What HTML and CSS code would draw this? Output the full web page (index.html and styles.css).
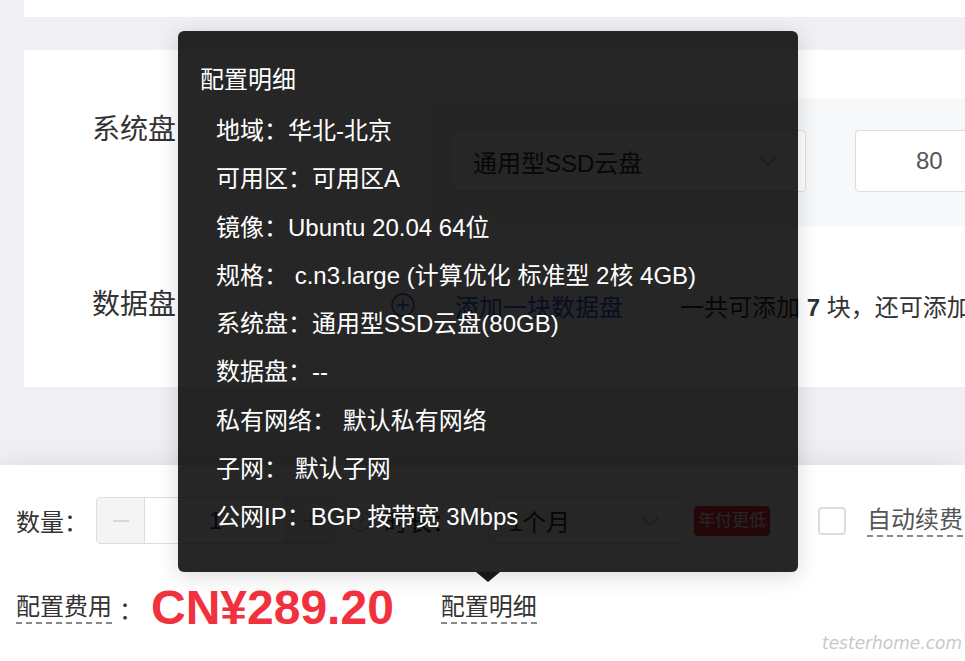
FILE: index.html
```html
<!DOCTYPE html>
<html>
<head>
    <meta charset="utf-8">
    <title>配置明细</title>
    <link rel="stylesheet" href="styles.css">
</head>
<body>
<div class="page">
    <div class="strip"></div>

    <section class="card">
        <div class="row row-sys">
            <div class="row-label">系统盘</div>
            <div class="disk-panel">
                <div class="select select-disk">
                    <span>通用型SSD云盘</span>
                    <svg class="chevron" width="18" height="10" viewBox="0 0 18 10"><path d="M1 1l8 8 8-8" fill="none" stroke="#aaa" stroke-width="1.3"/></svg>
                </div>
                <div class="size-input">80</div>
            </div>
        </div>
        <div class="row row-data">
            <div class="row-label">数据盘</div>
            <a class="add-link">
                <svg width="24" height="24" viewBox="0 0 24 24"><circle cx="12" cy="12" r="11" fill="none" stroke="#2f5bea" stroke-width="1.4"/><path d="M12 6v12M6 12h12" stroke="#2f5bea" stroke-width="1.4"/></svg>
                <span>添加一块数据盘</span>
            </a>
            <span class="add-hint">一共可添加 <b>7</b> 块，还可添加</span>
        </div>
    </section>

    <footer class="buy-bar">
        <div class="buy-row">
            <span class="buy-label">数量：</span>
            <div class="stepper">
                <span class="step-btn"><svg width="16" height="2" viewBox="0 0 16 2"><path d="M0 1h16" stroke="#bbb" stroke-width="1.2"/></svg></span>
                <span class="step-value">1</span>
                <span class="step-btn step-plus"><svg width="16" height="16" viewBox="0 0 16 16"><path d="M0 8h16M8 0v16" stroke="#888" stroke-width="1.2"/></svg></span>
            </div>
            <svg class="help-icon" width="22" height="22" viewBox="0 0 22 22"><circle cx="11" cy="11" r="10" fill="none" stroke="#bbb" stroke-width="1.3"/><path d="M8 8.5a3 3 0 1 1 4.2 2.7c-.8.4-1.2 1-1.2 1.8v.8" fill="none" stroke="#bbb" stroke-width="1.3"/><circle cx="11" cy="16.3" r=".9" fill="#bbb"/></svg>
            <span class="buy-label period-label">时长：</span>
            <div class="select select-period">
                <span>1个月</span>
                <svg class="chevron" width="18" height="10" viewBox="0 0 18 10"><path d="M1 1l8 8 8-8" fill="none" stroke="#aaa" stroke-width="1.3"/></svg>
            </div>
            <span class="tag">年付更低</span>
            <label class="auto-renew">
                <span class="checkbox"></span>
                <span class="dashed renew-text">自动续费</span>
            </label>
        </div>
        <div class="buy-row price-row">
            <span class="dashed">配置费用</span><span class="colon">：</span>
            <span class="price">CN¥289.20</span>
            <span class="dashed detail-trigger">配置明细</span>
        </div>
        <div class="watermark">testerhome.com</div>
    </footer>

    <div class="tooltip">
        <div class="tooltip-title">配置明细</div>
        <ul class="tooltip-list">
            <li>地域：华北-北京</li>
            <li>可用区：可用区A</li>
            <li>镜像：Ubuntu 20.04 64位</li>
            <li>规格： c.n3.large (计算优化 标准型 2核 4GB)</li>
            <li>系统盘：通用型SSD云盘(80GB)</li>
            <li>数据盘：--</li>
            <li>私有网络： 默认私有网络</li>
            <li>子网： 默认子网</li>
            <li>公网IP：BGP 按带宽 3Mbps</li>
        </ul>
    </div>
</div>
</body>
</html>
```

FILE: styles.css
```css
body {
    margin: 0;
    background-color: #f0f0f4;
    color: #333;
    font-family: "Liberation Sans", "Noto Sans CJK SC", sans-serif;
}
.page {
    position: relative;
    height: 661px;
    overflow: hidden;
}
.strip {
    margin-left: 24px;
    height: 17px;
    margin-bottom: 33px;
    background-color: #fff;
}

/* disk card */
.card {
    margin-left: 24px;
    padding: 48px 0 62px 68px;
    background-color: #fff;
}
.row {
    display: flex;
    align-items: flex-start;
    white-space: nowrap;
}
.row > * {
    flex-shrink: 0;
}
.row-label {
    width: 299px;
    font-size: 28px;
    line-height: 40px;
}
.row-sys .row-label {
    padding-top: 12px;
}
.row .disk-panel {
    display: flex;
    gap: 49px;
    flex: 1 0 auto;
    height: 128px;
    box-sizing: border-box;
    margin-left: 39px;
    padding: 32px 20px;
    background-color: #f7f8fa;
}
.select {
    display: flex;
    align-items: center;
    justify-content: space-between;
    box-sizing: border-box;
    border: 1px solid #ddd;
    border-radius: 4px;
    background-color: #fff;
    font-size: 24px;
}
.select-disk {
    width: 356px;
    height: 62px;
    padding: 0 28px 0 22px;
}
.size-input {
    width: 200px;
    height: 62px;
    flex-shrink: 0;
    box-sizing: border-box;
    padding-left: 60px;
    border: 1px solid #ddd;
    border-radius: 4px;
    background-color: #fff;
    font-size: 24px;
    line-height: 60px;
    color: #555;
}
.row-data {
    align-items: center;
    margin-top: 59px;
}
.add-link {
    display: flex;
    align-items: center;
    gap: 40px;
    color: #2f5bea;
    font-size: 24px;
}
.add-hint {
    margin-left: 57px;
    font-size: 24px;
}

/* bottom buy bar */
.buy-bar {
    position: relative;
    height: 196px;
    box-sizing: border-box;
    margin-top: 78px;
    padding: 32px 16px 0;
    background-color: #fff;
    box-shadow: 0 -4px 24px rgba(0, 0, 0, 0.07);
    white-space: nowrap;
}
.buy-row {
    display: flex;
    align-items: center;
    height: 47px;
}
.buy-row > * {
    flex-shrink: 0;
}
.buy-label {
    font-size: 24px;
}
.stepper {
    display: flex;
    width: 239px;
    height: 47px;
    box-sizing: border-box;
    margin-left: 8px;
    border: 1px solid #ddd;
    border-radius: 4px;
    overflow: hidden;
}
.step-btn {
    display: flex;
    align-items: center;
    justify-content: center;
    width: 47px;
    background-color: #f4f4f4;
    border-right: 1px solid #ddd;
}
.step-plus {
    border-right: none;
    border-left: 1px solid #ddd;
}
.step-value {
    flex: 1;
    text-align: center;
    font-size: 24px;
    line-height: 45px;
}
.help-icon {
    margin-left: 14px;
}
.period-label {
    margin-left: 13px;
}
.select-period {
    width: 198px;
    height: 47px;
    margin-left: 32px;
    padding: 0 26px 0 20px;
}
.tag {
    margin-left: 8px;
    padding: 0 4px;
    border-radius: 4px;
    background-color: #f2313e;
    color: #fff;
    font-size: 17px;
    line-height: 30px;
}
.auto-renew {
    display: flex;
    align-items: center;
    margin-left: 48px;
}
.checkbox {
    width: 28px;
    height: 28px;
    box-sizing: border-box;
    border: 2px solid #ddd;
    border-radius: 4px;
}
.renew-text {
    margin-left: 21px;
    color: #555;
}
.dashed {
    font-size: 24px;
    line-height: 30px;
    border-bottom: 2px dashed #888;
}
.price-row {
    height: 56px;
    margin-top: 36px;
}
.colon {
    margin-left: 7px;
    font-size: 24px;
}
.price {
    margin-left: 8px;
    color: #f2313e;
    font-size: 48px;
    font-weight: bold;
    line-height: 56px;
}
.detail-trigger {
    margin-left: 47px;
}
.watermark {
    position: absolute;
    right: 3px;
    bottom: 8px;
    color: #c8c8c8;
    font-family: "DejaVu Sans", sans-serif;
    font-size: 17px;
    font-style: italic;
    font-weight: 300;
}

/* detail tooltip */
.tooltip {
    position: absolute;
    left: 178px;
    top: 31px;
    width: 620px;
    height: 541px;
    box-sizing: border-box;
    padding: 25px 22px;
    border-radius: 6px;
    background-color: rgba(0, 0, 0, 0.85);
    box-shadow: 0 4px 22px rgba(0, 0, 0, 0.15);
    color: #fff;
    font-size: 24px;
    line-height: 48px;
    white-space: nowrap;
}
.tooltip::after {
    content: "";
    position: absolute;
    left: 298px;
    top: 100%;
    border-left: 12px solid transparent;
    border-right: 12px solid transparent;
    border-top: 10px solid rgba(0, 0, 0, 0.9);
}
.tooltip-list {
    list-style: none;
    margin: 3px 0 0;
    padding-left: 16px;
}
.tooltip-list li {
    line-height: 48.25px;
}
```
